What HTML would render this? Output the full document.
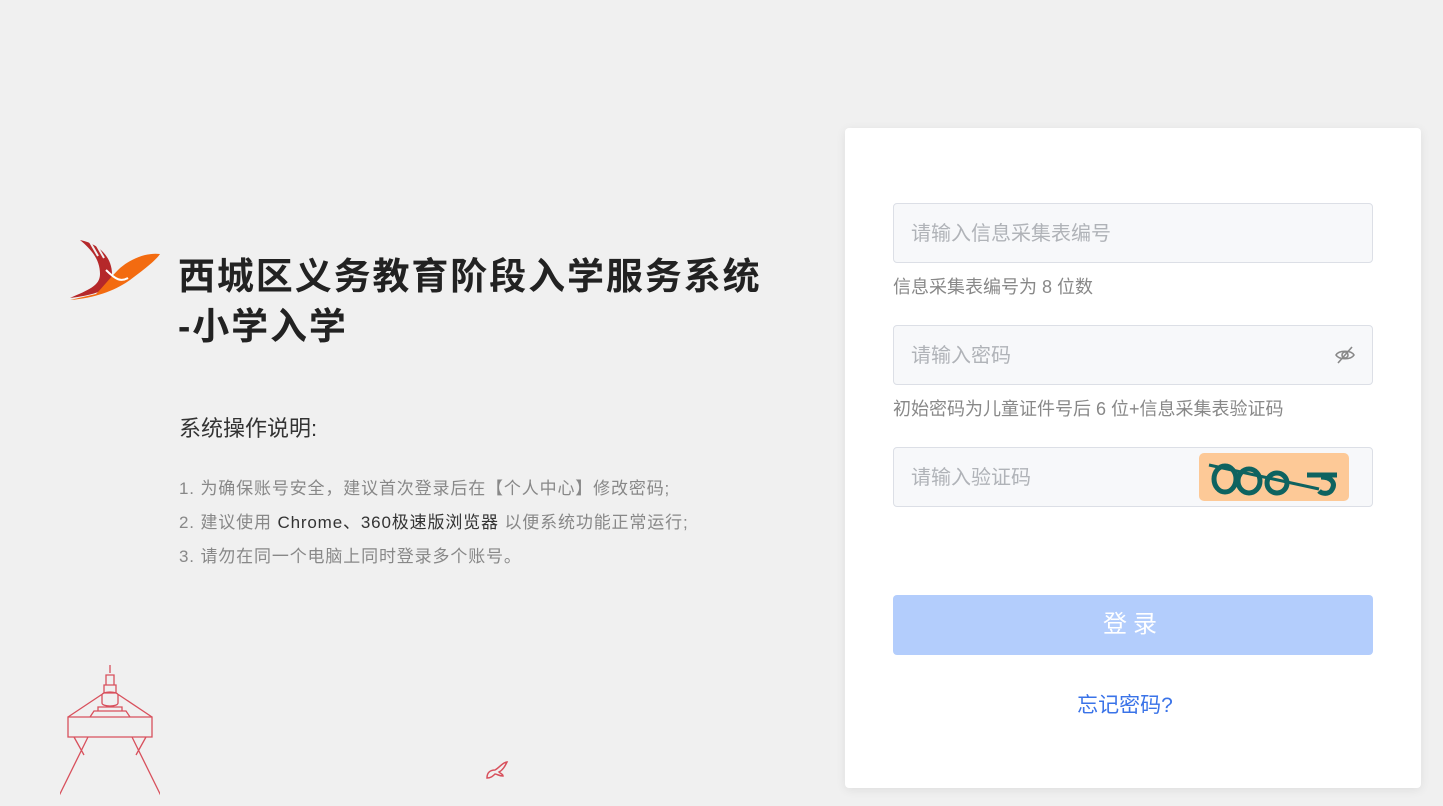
<!DOCTYPE html>
<html><head><meta charset="utf-8"><style>
*{margin:0;padding:0;box-sizing:border-box}
body{width:1443px;height:806px;overflow:hidden;background:#f0f0f0;font-family:"Liberation Sans","Noto Sans CJK SC",sans-serif;position:relative}
.title{position:absolute;left:178px;top:252px;font-size:37px;font-weight:bold;color:#222;line-height:50px;letter-spacing:1.9px}
.sub{position:absolute;left:179px;top:411px;font-size:22px;color:#333}
.list{position:absolute;left:179px;top:472px;font-size:17px;color:#888;line-height:34px;letter-spacing:0.85px}
.list span{color:#333}
.card{position:absolute;left:845px;top:128px;width:576px;height:660px;background:#fff;border-radius:4px;box-shadow:0 2px 10px rgba(0,0,0,.08)}
.inp{position:absolute;left:48px;width:480px;height:60px;background:#f7f8fa;border:1px solid #dcdfe6;border-radius:4px;font-size:20px;color:#b0b3b8;padding-left:17px;line-height:60px}
.hint{position:absolute;left:48px;font-size:18px;color:#888}
.btn{position:absolute;left:48px;top:467px;width:480px;height:60px;background:#b3cdfc;border-radius:4px;color:#fff;font-size:24px;text-align:center;line-height:60px;letter-spacing:6px}
.fg{position:absolute;left:-8px;width:576px;top:561px;text-align:center;color:#3a73e8;font-size:21px}
</style></head><body>
<svg style="position:absolute;left:66px;top:238px" width="96" height="66" viewBox="0 0 96 66">
<path d="M14 2 C34 6 46 20 46 36 C46 50 36 56 4 60 C22 52 34 48 34 36 C34 22 26 12 14 2Z" fill="#b5282a"/>
<path d="M24 4 L32 18 M30 6 L38 20" stroke="#f0f0f0" stroke-width="2"/>
<path d="M4 62 C30 60 50 52 64 42 C80 30 90 22 94 16 C80 14 62 22 52 32 C44 40 36 50 30 56Z" fill="#f36b10"/>
<path d="M40 32 C50 42 55 44 62 40" stroke="#fff" stroke-width="2" fill="none"/>
</svg>
<div class="title">西城区义务教育阶段入学服务系统<br>-小学入学</div>
<div class="sub">系统操作说明:</div>
<div class="list">1. 为确保账号安全，建议首次登录后在【个人中心】修改密码;<br>2. 建议使用 <span>Chrome、360极速版浏览器</span> 以便系统功能正常运行;<br>3. 请勿在同一个电脑上同时登录多个账号。</div>
<svg style="position:absolute;left:60px;top:665px" width="100" height="141" viewBox="0 0 100 141" fill="none" stroke="#d8505c" stroke-width="1.3">
<path d="M50 0V8M46 10h8v10h-8zM44 20h12v8h-12zM42 30c0-4 16-4 16 0v8c0 4-16 4-16 0zM38 42h24v4H38zM34 46h32l4 6H30zM8 52h84v20H8zM28 72L-6 141M72 72l34 69M14 72l10 18M86 72l-10 18M44 28L8 52M56 28l36 24"/>
</svg>
<svg style="position:absolute;left:484px;top:758px" width="26" height="24" viewBox="0 0 26 24" fill="none" stroke="#d8505c" stroke-width="1.5"><path d="M3 20c0-6 4-8 8-8 4-2 8-8 12-8-2 4-4 8-8 10 2 2 4 2 4 4-4 0-6-2-8-2-2 2-4 4-8 4z"/></svg>
<div class="card">
<div class="inp" style="top:75px">请输入信息采集表编号</div>
<div class="hint" style="top:145px">信息采集表编号为 8 位数</div>
<div class="inp" style="top:197px">请输入密码
<svg style="position:absolute;right:16px;top:19px" width="22" height="20" viewBox="0 0 22 20" fill="none" stroke="#888" stroke-width="1.6"><path d="M2 10c3-5 15-5 18 0-3 5-15 5-18 0z"/><circle cx="11" cy="10" r="3"/><path d="M4 18L18 2"/></svg></div>
<div class="hint" style="top:267px">初始密码为儿童证件号后 6 位+信息采集表验证码</div>
<div class="inp" style="top:319px">请输入验证码
<svg style="position:absolute;left:305px;top:5px" width="150" height="48" viewBox="0 0 150 48"><rect width="150" height="48" rx="5" fill="#fdc997"/><g fill="none" stroke="#0e6360" stroke-width="5"><ellipse cx="26" cy="26" rx="11" ry="13"/><ellipse cx="50" cy="28" rx="11" ry="12"/><ellipse cx="78" cy="30" rx="10" ry="10"/><path d="M108 22h30M122 24c10 0 16 6 10 14-4 4-10 2-12 0"/><path d="M10 12l110 24" stroke-width="3"/></g></svg></div>
<div class="btn">登录</div>
<div class="fg">忘记密码?</div>
</div>
</body></html>
